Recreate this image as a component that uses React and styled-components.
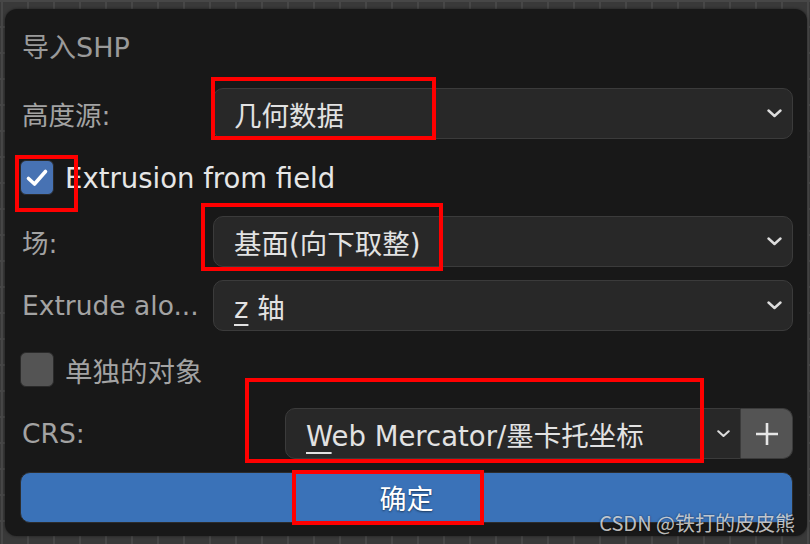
import React from 'react'
import styled, { createGlobalStyle } from 'styled-components'

const GlobalStyle = createGlobalStyle`
  html, body {
    margin: 0;
    padding: 0;
  }
  body {
    width: 810px;
    height: 544px;
    overflow: hidden;
    background-color: #393939;
    background-image:
      linear-gradient(to right, #474747 2px, transparent 2px),
      linear-gradient(to bottom, #474747 2px, transparent 2px);
    background-size: 26px 26px;
    background-position: 1px 0;
    font-family: 'DejaVu Sans', 'Noto Sans CJK SC', sans-serif;
  }
`

const Stage = styled.div`
  position: relative;
  width: 810px;
  height: 544px;
  padding: 9px 3px 8px 5px;
  box-sizing: border-box;
`

const Panel = styled.div`
  height: 100%;
  box-sizing: border-box;
  background: #181818;
  border-radius: 12px;
  padding: 24px 14px 0 15px;
  display: flex;
  flex-direction: column;
  gap: 13px;
  box-shadow: 0 0 3px rgba(0, 0, 0, 0.5);
`

const Title = styled.div`
  height: 30px;
  line-height: 30px;
  font-size: 27px;
  color: #9a9a9a;
  margin-bottom: 12px;
  padding-left: 2px;
`

const Row = styled.div`
  display: grid;
  grid-template-columns: ${(p) => p.$label || '193px'} 1fr;
  align-items: center;
  height: 51px;
`

const Label = styled.div`
  font-size: 26.5px;
  color: #a3a3a3;
  padding-left: 2px;
  white-space: nowrap;
`

const Select = styled.div`
  display: flex;
  align-items: center;
  justify-content: space-between;
  height: 51px;
  box-sizing: border-box;
  background: #282828;
  border: 1px solid #3b3b3b;
  border-radius: ${(p) => (p.$joined ? '10px 0 0 10px' : '10px')};
  padding: 0 10px 0 20px;
  font-size: 27.5px;
  color: #e2e2e2;
  flex: 1;
  white-space: nowrap;
`

const Key = styled.span`
  text-decoration: underline;
  text-underline-offset: 6px;
  text-decoration-thickness: 2px;
`

const Compound = styled.div`
  display: flex;
  height: 51px;
`

const PlusButton = styled.div`
  width: 52px;
  height: 51px;
  box-sizing: border-box;
  background: #545454;
  border: 1px solid #3b3b3b;
  border-left: none;
  border-radius: 0 10px 10px 0;
  display: flex;
  align-items: center;
  justify-content: center;
`

const CheckRow = styled.label`
  display: flex;
  align-items: center;
  gap: 11px;
  height: 51px;
  font-size: 27.5px;
  color: ${(p) => (p.$on ? '#e6e6e6' : '#a3a3a3')};
`

const Box = styled.span`
  width: 34px;
  height: 35px;
  box-sizing: border-box;
  border-radius: 6px;
  background: ${(p) => (p.$on ? '#4772b3' : '#545454')};
  border: 1px solid #2a2a2a;
  display: flex;
  align-items: center;
  justify-content: center;
`

const OkButton = styled.button`
  height: 51px;
  box-sizing: border-box;
  background: #3a72b8;
  border: 1px solid #2c2c2c;
  border-radius: 10px;
  color: #ffffff;
  font-family: inherit;
  font-size: 27px;
  text-shadow: 0 1px 2px rgba(0, 0, 0, 0.5);
`

const Mark = styled.div`
  position: absolute;
  border: 4px solid #ff0000;
  box-sizing: border-box;
  pointer-events: none;
`

const Watermark = styled.div`
  position: absolute;
  right: 15px;
  bottom: 7px;
  font-family: 'Noto Sans CJK SC', 'DejaVu Sans', sans-serif;
  font-size: 20px;
  color: rgba(235, 235, 235, 0.8);
  text-shadow: 0 0 2px rgba(0, 0, 0, 0.6);
`

const Chevron = ({ size = 15 }) => (
  <svg width={size} height={size * 0.6} viewBox="0 0 15 9">
    <path d="M1.5 1.5 L7.5 7 L13.5 1.5" fill="none" stroke="#dcdcdc" strokeWidth="2.4" strokeLinecap="round" strokeLinejoin="round" />
  </svg>
)

const Tick = () => (
  <svg width="24" height="20" viewBox="0 0 24 20">
    <path d="M3.5 10.5 L9.5 16 L20.5 3.5" fill="none" stroke="#ffffff" strokeWidth="3.6" strokeLinecap="round" strokeLinejoin="round" />
  </svg>
)

const Plus = () => (
  <svg width="24" height="24" viewBox="0 0 24 24">
    <path d="M12 1 V23 M1 12 H23" stroke="#e6e6e6" strokeWidth="2.6" />
  </svg>
)

const marks = [
  { left: 211, top: 77, width: 225, height: 63 },
  { left: 15, top: 155, width: 63, height: 57 },
  { left: 201, top: 203, width: 242, height: 68 },
  { left: 245, top: 378, width: 459, height: 85 },
  { left: 292, top: 470, width: 192, height: 55 },
]

export default function App() {
  return (
    <Stage>
      <GlobalStyle />
      <Panel>
        <Title>导入SHP</Title>
        <Row>
          <Label>高度源:</Label>
          <Select>
            <span>几何数据</span>
            <Chevron />
          </Select>
        </Row>
        <CheckRow $on>
          <Box $on>
            <Tick />
          </Box>
          Extrusion from field
        </CheckRow>
        <Row>
          <Label>场:</Label>
          <Select>
            <span>基面(向下取整)</span>
            <Chevron />
          </Select>
        </Row>
        <Row>
          <Label>Extrude alo...</Label>
          <Select>
            <span>
              <Key>z</Key> 轴
            </span>
            <Chevron />
          </Select>
        </Row>
        <CheckRow>
          <Box />
          单独的对象
        </CheckRow>
        <Row $label="265px">
          <Label>CRS:</Label>
          <Compound>
            <Select $joined>
              <span>
                <Key>W</Key>eb Mercator/墨卡托坐标
              </span>
              <Chevron size={13} />
            </Select>
            <PlusButton>
              <Plus />
            </PlusButton>
          </Compound>
        </Row>
        <OkButton>确定</OkButton>
      </Panel>
      {marks.map((m, i) => (
        <Mark key={i} style={m} />
      ))}
      <Watermark>CSDN @铁打的皮皮熊</Watermark>
    </Stage>
  )
}
